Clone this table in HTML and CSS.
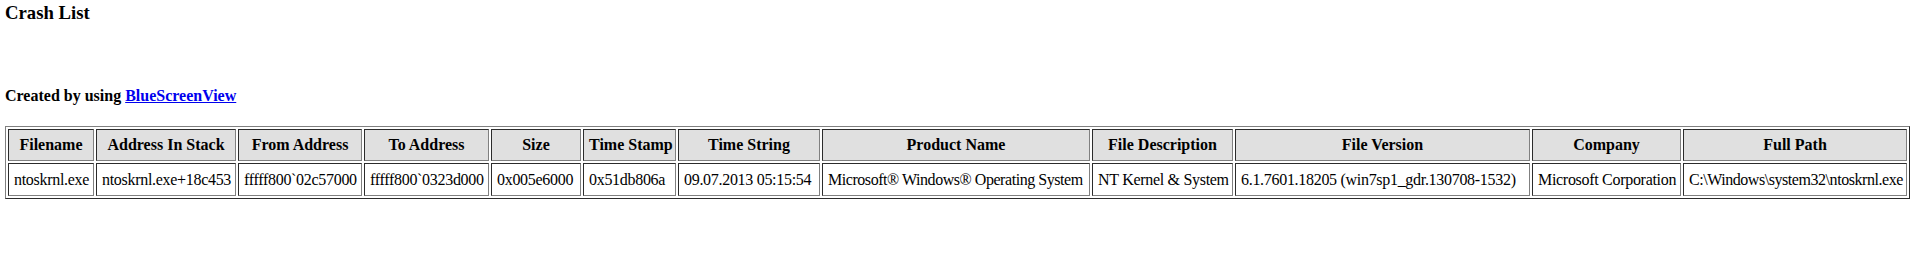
FILE: index.html
```html
<!DOCTYPE html>
<html>
<head>
<meta charset="utf-8">
<title>Crash List</title>
<link rel="stylesheet" href="styles.css">
</head>
<body>
<h3 class="title">Crash List</h3>
<h4 class="credit">Created by using <a href="#">BlueScreenView</a></h4>
<table class="report" border="1" cellpadding="5">
<tr class="head">
<th class="c1">Filename</th>
<th class="c2">Address In Stack</th>
<th class="c3">From Address</th>
<th class="c4">To Address</th>
<th class="c5">Size</th>
<th class="c6">Time Stamp</th>
<th class="c7">Time String</th>
<th class="c8">Product Name</th>
<th class="c9">File Description</th>
<th class="c10">File Version</th>
<th class="c11">Company</th>
<th class="c12">Full Path</th>
</tr>
<tr>
<td>ntoskrnl.exe</td>
<td>ntoskrnl.exe+18c453</td>
<td>fffff800`02c57000</td>
<td>fffff800`0323d000</td>
<td>0x005e6000</td>
<td>0x51db806a</td>
<td>09.07.2013 05:15:54</td>
<td class="tight">Microsoft® Windows® Operating System</td>
<td>NT Kernel &amp; System</td>
<td>6.1.7601.18205 (win7sp1_gdr.130708-1532)</td>
<td>Microsoft Corporation</td>
<td class="tight">C:\Windows\system32\ntoskrnl.exe</td>
</tr>
</table>
</body>
</html>
```
FILE: styles.css
```css
body {
  margin: 0 5px;
  font-family: "Liberation Serif", "Times New Roman", serif;
  color: #000;
  background: #fff;
}
.title {
  margin: 2px 0 0;
  font-size: 18.72px;
  line-height: 21.5px;
}
.credit {
  margin: 63px 0 21px;
  font-size: 16px;
  line-height: 18.4px;
}
.credit a {
  color: #0000ee;
}
.report {
  box-sizing: border-box;
  table-layout: fixed;
  border-collapse: separate;
  border-spacing: 2px;
  border: 1px outset #808080;
  width: 1905px;
}
.report th,
.report td {
  box-sizing: border-box;
  white-space: nowrap;
  padding: 5px;
  font-size: 16px;
  border: 1px inset #808080;
  overflow: visible;
}
.report th {
  line-height: 20px;
  text-align: center;
  font-weight: bold;
}
.report td {
  line-height: 21px;
  text-align: left;
  letter-spacing: -0.3px;
}
.report td.tight {
  letter-spacing: -0.45px;
}
.report .head {
  background: #e0e0e0;
}
.c1 { width: 86px; }
.c2 { width: 140px; }
.c3 { width: 124px; }
.c4 { width: 125px; }
.c5 { width: 90px; }
.c6 { width: 93px; }
.c7 { width: 142px; }
.c8 { width: 268px; }
.c9 { width: 141px; }
.c10 { width: 295px; }
.c11 { width: 149px; }
.c12 { width: 224px; }
```
